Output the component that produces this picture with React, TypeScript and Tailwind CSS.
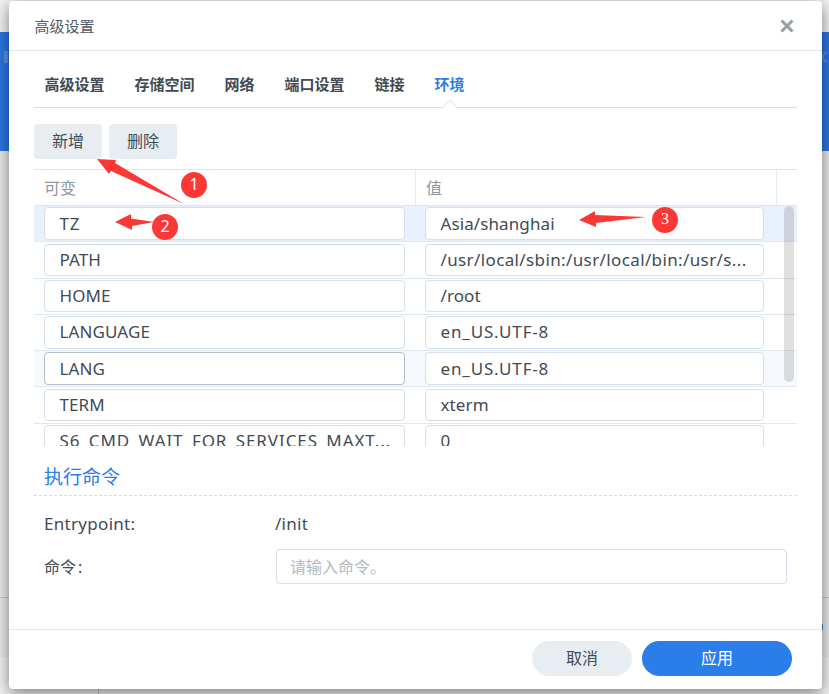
import React, { useState } from 'react';
import clsx from 'clsx';

interface EnvRow {
  name: string;
  value: string;
  rowClass: string;
  fieldClass: string;
  nameClass?: string;
  valueClass?: string;
  focused?: boolean;
}

const tabs = ['高级设置', '存储空间', '网络', '端口设置', '链接', '环境'];

const envRows: EnvRow[] = [
  { name: 'TZ', value: 'Asia/shanghai', rowClass: 'h-9 pt-px bg-[#e8f1fd]', fieldClass: 'h-[33px]', nameClass: 'tracking-[0.8px]' },
  { name: 'PATH', value: '/usr/local/sbin:/usr/local/bin:/usr/s...', rowClass: 'h-[37px] pt-0.5', fieldClass: 'h-8', valueClass: 'tracking-[0.38px]' },
  { name: 'HOME', value: '/root', rowClass: 'h-9 pt-px', fieldClass: 'h-8' },
  { name: 'LANGUAGE', value: 'en_US.UTF-8', rowClass: 'h-9 pt-px', fieldClass: 'h-[33px] pb-px', valueClass: 'tracking-[0.83px]' },
  { name: 'LANG', value: 'en_US.UTF-8', rowClass: 'h-9 pt-px bg-[#f5f9fe]', fieldClass: 'h-[33px]', valueClass: 'tracking-[0.83px]', focused: true },
  { name: 'TERM', value: 'xterm', rowClass: 'h-[37px] pt-0.5', fieldClass: 'h-8' },
  { name: 'S6_CMD_WAIT_FOR_SERVICES_MAXT...', value: '0', rowClass: 'h-9 pt-px', fieldClass: 'h-8', nameClass: 'tracking-[0.91px]' },
];

function Field({ value, className, textClass }: { value: string; className: string; textClass?: string }) {
  return (
    <div
      className={clsx(
        'flex items-center overflow-hidden whitespace-nowrap rounded border bg-white pl-[14.5px] text-[17px]',
        className,
        textClass || 'tracking-[0.1px]'
      )}
    >
      {value}
    </div>
  );
}

// Page behind the dialog, already dimmed
function Backdrop() {
  return (
    <div className="absolute inset-0 flex flex-col">
      <div className="h-8 bg-[#f3f3f3]" />
      <div className="flex h-[119px] items-start justify-between bg-[#2b77e2] pt-[19px]">
        <div className="ml-1 h-3 w-1 bg-[#5c93e0]" />
        <div className="h-3 w-[7px] text-[#5c93e0]">
          <svg width="7" height="12" viewBox="0 0 7 12" fill="none" stroke="currentColor" strokeWidth="2">
            <path d="M4 1L0 6L4 11" />
          </svg>
        </div>
      </div>
      <div className="h-[446px] bg-[#ebebeb]" />
      <div className="flex h-[60px] items-start justify-end border-t border-[#c3cbd3] bg-[#ebebeb] pr-1.5 pt-5">
        <div className="h-[18px] w-5 rounded-full bg-[#2870d6]" />
      </div>
      <div className="flex-1 bg-[#f3f3f3]">
        <div className="ml-[98px] h-full w-px bg-[#b9bdc4]" />
      </div>
    </div>
  );
}

function Annotations() {
  return (
    <svg className="pointer-events-none absolute inset-0" width="829" height="694" viewBox="0 0 829 694">
      <g fill="#fc3836">
        <polygon points="97,159 116,160 115,163 184,204 111,171 109,174" />
        <polygon points="115,222 131,214 131,218.5 154,222 132,226 132,230" />
        <polygon points="579,220 595,211 595,215 646,217 596,223 596,227" />
        <circle cx="194" cy="185" r="13" />
        <circle cx="165" cy="227" r="13" />
        <circle cx="665" cy="220" r="13" />
      </g>
      <g fill="#fff" fontSize="16" textAnchor="middle" fontFamily="'Noto Sans', sans-serif">
        <text x="194" y="189.5">1</text>
        <text x="165" y="231.5">2</text>
        <text x="665" y="224" fontFamily="'Liberation Serif', serif">3</text>
      </g>
    </svg>
  );
}

export default function App() {
  const [activeTab, setActiveTab] = useState('环境');

  return (
    <div className="relative h-[694px] w-[829px] overflow-hidden bg-[#e6e6e6] font-['Noto_Sans','Noto_Sans_CJK_SC',sans-serif] text-[#414b55]">
      <Backdrop />

      <div className="absolute left-[9px] top-px flex h-[688px] w-[813px] flex-col rounded bg-white shadow-[0_4px_16px_rgba(0,0,0,0.5)]">
        {/* Title bar */}
        <div className="flex h-[50px] shrink-0 items-center justify-between border-b border-[#dfe7ee] pl-[25.5px] pr-7">
          <h2 className="pt-px text-[15px] text-[#505a64]">高级设置</h2>
          <svg width="14" height="14" viewBox="0 0 14 14" stroke="#969da4" strokeWidth="3">
            <path d="M1.5 1.5L12.5 12.5M12.5 1.5L1.5 12.5" />
          </svg>
        </div>

        <div className="flex flex-1 flex-col pl-[25px] pr-[25px]">
          {/* Tabs */}
          <div className="flex h-[57px] shrink-0 gap-[30px] border-b border-[#d4dfe9] pl-[10.5px] pt-[21px]">
            {tabs.map((tab) => (
              <button
                key={tab}
                onClick={() => setActiveTab(tab)}
                className={clsx(
                  'relative h-9 text-[15px] font-bold leading-6',
                  tab === activeTab ? 'text-[#2b7de9]' : 'text-[#414b55]'
                )}
              >
                <span className="block h-9">{tab}</span>
                {tab === activeTab && (
                  <svg className="absolute bottom-[-1px] left-1.5" width="18" height="9" viewBox="0 0 18 9" fill="#fff">
                    <path d="M0.5 8.5L9 0.5L17.5 8.5" stroke="#d4dfe9" />
                  </svg>
                )}
              </button>
            ))}
          </div>

          {/* Toolbar */}
          <div className="flex h-[61px] shrink-0 gap-[7px] pt-4">
            <button className="h-[35px] w-[68px] rounded bg-[#e8edf1] pb-0.5 text-base">新增</button>
            <button className="h-[35px] w-[68px] rounded bg-[#e8edf1] pb-0.5 text-base">删除</button>
          </div>

          {/* Environment table */}
          <div className="flex h-[37px] shrink-0 border-y border-[#dce5ed] text-base leading-[36px] text-[#8e969e]">
            <div className="w-[382px] border-r border-[#e3eaf0] pl-2.5">可变</div>
            <div className="w-[361px] border-r border-[#e3eaf0] pl-2.5">值</div>
          </div>
          <div className="relative h-60 shrink-0 overflow-hidden">
            {envRows.map((row) => (
              <div
                key={row.name}
                className={clsx('flex items-start gap-5 border-b border-[#e1e9f0] pl-2.5', row.rowClass)}
              >
                <Field
                  value={row.name}
                  className={clsx('w-[361px]', row.fieldClass, row.focused ? 'border-[#b5bfc9]' : 'border-[#d4dfe9]')}
                  textClass={row.nameClass}
                />
                <Field
                  value={row.value}
                  className={clsx('w-[339px] border-[#d4dfe9]', row.fieldClass)}
                  textClass={row.valueClass}
                />
              </div>
            ))}
            <div className="absolute right-[3px] top-0 h-44 w-2.5 rounded-full bg-black/12" />
          </div>

          {/* Command */}
          <div className="flex h-[50px] shrink-0 items-end border-b border-dashed border-[#d9dde1] pb-[3px] pl-2.5">
            <h3 className="text-[19px] leading-[30px] text-[#2b7de9]">执行命令</h3>
          </div>
          <div className="mt-3 flex h-8 items-center pl-2.5 text-[17px] tracking-[0.3px]">
            <span className="w-[231px]">Entrypoint:</span>
            <span>/init</span>
          </div>
          <div className="mt-[9px] flex h-[35px] items-center pl-2.5 text-base">
            <span className="w-[232px]">命令<span className="pl-0.5">:</span></span>
            <input
              className="h-[35px] w-[511px] rounded border border-[#d4dfe9] px-[13px] text-base placeholder:text-[#b3b9bf]"
              placeholder="请输入命令。"
            />
          </div>
        </div>

        {/* Footer */}
        <div className="flex h-[60px] shrink-0 justify-end gap-2.5 border-t border-[#dfe7ee] pr-[30px] pt-[11px]">
          <button className="h-[35px] w-[100px] rounded-full bg-[#e8edf1] pb-0.5 text-base">取消</button>
          <button className="h-[35px] w-[150px] rounded-full bg-[#2b7de9] pb-0.5 text-base text-white">应用</button>
        </div>
      </div>

      <Annotations />
    </div>
  );
}
